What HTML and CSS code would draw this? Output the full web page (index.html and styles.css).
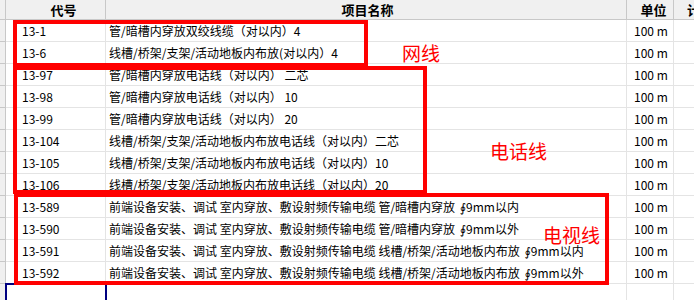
FILE: index.html
```html
<!DOCTYPE html>
<html lang="zh-CN">
<head>
<meta charset="utf-8">
<title>定额清单</title>
<link rel="stylesheet" href="styles.css">
</head>
<body>
<div class="sheet">
  <div class="row head">
    <div class="gut"></div>
    <div class="c code">代号</div>
    <div class="c name">项目名称</div>
    <div class="c unit">单位</div>
    <div class="c extra">计</div>
  </div>
  <div class="row"><div class="gut"></div><div class="c code">13-1</div><div class="c name">管/暗槽内穿放双绞线缆（对以内）4</div><div class="c unit">100 m</div><div class="c extra"></div></div>
  <div class="row"><div class="gut"></div><div class="c code">13-6</div><div class="c name">线槽/桥架/支架/活动地板内布放(对以内）4</div><div class="c unit">100 m</div><div class="c extra"></div></div>
  <div class="row"><div class="gut"></div><div class="c code">13-97</div><div class="c name">管/暗槽内穿放电话线（对以内） 二芯</div><div class="c unit">100 m</div><div class="c extra"></div></div>
  <div class="row"><div class="gut"></div><div class="c code">13-98</div><div class="c name">管/暗槽内穿放电话线（对以内） 10</div><div class="c unit">100 m</div><div class="c extra"></div></div>
  <div class="row"><div class="gut"></div><div class="c code">13-99</div><div class="c name">管/暗槽内穿放电话线（对以内） 20</div><div class="c unit">100 m</div><div class="c extra"></div></div>
  <div class="row"><div class="gut"></div><div class="c code">13-104</div><div class="c name">线槽/桥架/支架/活动地板内布放电话线（对以内）二芯</div><div class="c unit">100 m</div><div class="c extra"></div></div>
  <div class="row"><div class="gut"></div><div class="c code">13-105</div><div class="c name">线槽/桥架/支架/活动地板内布放电话线（对以内）10</div><div class="c unit">100 m</div><div class="c extra"></div></div>
  <div class="row"><div class="gut"></div><div class="c code">13-106</div><div class="c name">线槽/桥架/支架/活动地板内布放电话线（对以内）20</div><div class="c unit">100 m</div><div class="c extra"></div></div>
  <div class="row"><div class="gut"></div><div class="c code">13-589</div><div class="c name">前端设备安装、调试 室内穿放、敷设射频传输电缆 管/暗槽内穿放 <span class="sym">∮</span>9mm以内</div><div class="c unit">100 m</div><div class="c extra"></div></div>
  <div class="row"><div class="gut"></div><div class="c code">13-590</div><div class="c name">前端设备安装、调试 室内穿放、敷设射频传输电缆 管/暗槽内穿放 <span class="sym">∮</span>9mm以外</div><div class="c unit">100 m</div><div class="c extra"></div></div>
  <div class="row"><div class="gut"></div><div class="c code">13-591</div><div class="c name">前端设备安装、调试 室内穿放、敷设射频传输电缆 线槽/桥架/活动地板内布放 <span class="sym">∮</span>9mm以内</div><div class="c unit">100 m</div><div class="c extra"></div></div>
  <div class="row"><div class="gut"></div><div class="c code">13-592</div><div class="c name">前端设备安装、调试 室内穿放、敷设射频传输电缆 线槽/桥架/活动地板内布放 <span class="sym">∮</span>9mm以外</div><div class="c unit">100 m</div><div class="c extra"></div></div>
  <div class="row"><div class="gut"></div><div class="c code sel"></div><div class="c name"></div><div class="c unit"></div><div class="c extra"></div></div>

  <div class="box box-net"></div>
  <div class="box box-tel"></div>
  <div class="box box-tv"></div>
  <div class="tag tag-net">网线</div>
  <div class="tag tag-tel">电话线</div>
  <div class="tag tag-tv">电视线</div>
</div>
</body>
</html>
```

FILE: styles.css
```css
html, body {
  margin: 0;
  padding: 0;
  background: #ffffff;
  overflow: hidden;
}
body {
  font-family: "Noto Sans CJK SC", "Liberation Sans", sans-serif;
  font-size: 12px;
  color: #000000;
}
.sheet {
  position: relative;
  width: 694px;
  height: 300px;
  overflow: hidden;
}
.row {
  display: grid;
  grid-template-columns: 6px 100px 521px 47px 60px;
  height: 22px;
}
.row.head {
  height: 20px;
  background: #f0f0f0;
}
.gut {
  background: #f0f0f0;
  border-right: 1px solid #c8c8c8;
  border-bottom: 1px solid #c8c8c8;
}
.c {
  box-sizing: border-box;
  border-right: 1px solid #e4e4e4;
  border-bottom: 1px solid #e4e4e4;
  line-height: 21px;
  white-space: nowrap;
  overflow: hidden;
}
.head .c {
  border-right-color: #c8c8c8;
  border-bottom-color: #c8c8c8;
  line-height: 19px;
  font-size: 13px;
  font-weight: bold;
  text-align: center;
}
.head .gut {
  border-bottom-color: #c8c8c8;
}
.code {
  padding-left: 16px;
}
.name {
  padding-left: 3px;
}
.unit {
  padding-left: 7px;
}
.head .extra {
  text-align: left;
  padding-left: 13px;
}
.sym {
  font-family: "DejaVu Sans", sans-serif;
  font-style: italic;
  font-size: 12px;
  margin-left: 2px;
}
.sel {
  outline: 2px solid #000080;
  outline-offset: -1px;
}
.box {
  position: absolute;
  box-sizing: border-box;
  border: 4px solid #ff0000;
}
.box-net {
  left: 13px;
  top: 20px;
  width: 355px;
  height: 47px;
}
.box-tel {
  left: 13px;
  top: 66px;
  width: 414px;
  height: 128px;
}
.box-tv {
  left: 14px;
  top: 193px;
  width: 595px;
  height: 92px;
}
.tag {
  position: absolute;
  color: #ff0000;
  font-size: 19px;
  line-height: 17px;
  white-space: nowrap;
}
.tag-net {
  left: 402px;
  top: 44px;
}
.tag-tel {
  left: 490px;
  top: 142px;
}
.tag-tv {
  left: 543px;
  top: 226px;
}
```
